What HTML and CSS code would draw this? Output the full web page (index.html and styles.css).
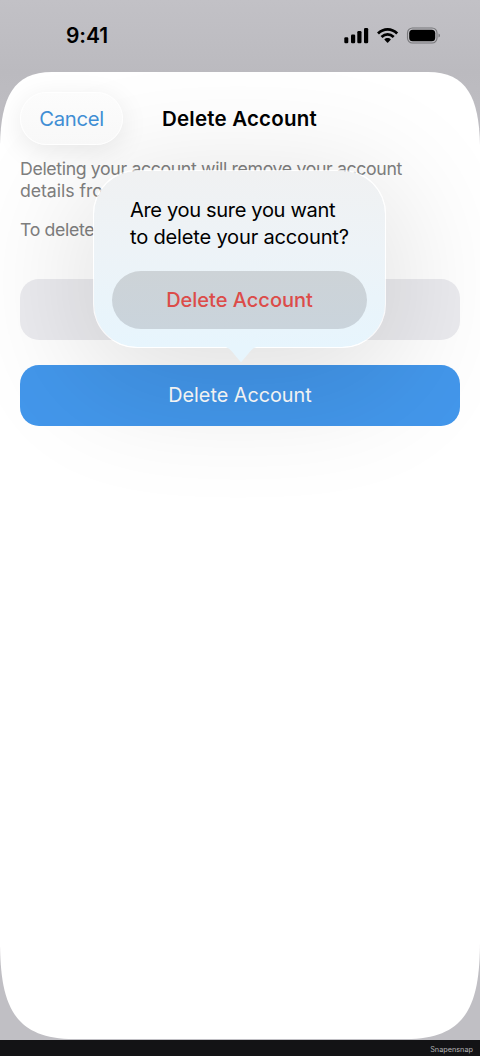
FILE: index.html
```html
<!DOCTYPE html>
<html lang="en">
<head>
<meta charset="utf-8">
<title>Delete Account</title>
<link rel="stylesheet" href="styles.css">
</head>
<body>
<div class="screen">
  <header class="status">
    <span class="time">9:41</span>
    <svg class="status-icons" width="98" height="20" viewBox="0 0 98 20">
      <rect x="1.3" y="11.2" width="4" height="6" rx="1.2"/>
      <rect x="8" y="8.5" width="4.2" height="8.7" rx="1.2"/>
      <rect x="14.3" y="5" width="4.2" height="12.2" rx="1.2"/>
      <rect x="21" y="2" width="4.2" height="15.2" rx="1.2"/>
      <g fill="none" stroke="#000" stroke-width="2.8">
        <path d="M35 7.4C40.7 1.9 48.5 1.9 54.2 7.4"/>
        <path d="M38.5 11C42.3 7.5 46.9 7.5 50.7 11"/>
      </g>
      <path d="M41.3 13.4C43.1 11.6 46.1 11.6 47.9 13.4L45.1 16.6Q44.6 17.1 44.1 16.6Z"/>
      <rect x="64.5" y="2" width="29.5" height="15" rx="5" fill="none" stroke="#77777a" stroke-width="1.1"/>
      <rect x="66.2" y="3.8" width="26" height="11.5" rx="3.5"/>
      <path d="M95.5 7.5Q97 8 97 9.5T95.5 11.5Z" fill="#77777a"/>
    </svg>
  </header>
  <main class="sheet">
    <svg class="sheet-shape" width="480" height="967" viewBox="0 72 480 967">
      <path fill="#fff" d="M0 145C1 98 13 72 52 72H428C467 72 479 98 480 145V940C480 1003 468 1039 406 1039H74C12 1039 0 1003 0 940Z"/>
    </svg>
    <div class="content">
      <p class="copy first">Deleting your account will remove your account<br><span class="copy-line">details from</span></p>
      <p class="copy">To delete</p>
      <div class="field"></div>
      <button class="submit">Delete Account</button>
    </div>
    <div class="shade-clip"><div class="shade"></div></div>
    <div class="nav">
      <button class="cancel">Cancel</button>
      <h1 class="title">Delete Account</h1>
    </div>
    <section class="popover">
      <svg class="popover-arrow" width="42" height="18" viewBox="0 0 42 18"><path fill="#e7f5fd" d="M0 0H42Q35 0 30.5 5L23 14Q21 18 19 14L11.5 5Q7 0 0 0Z"/></svg>
      <p class="question"><span class="question-line">Are you sure you want</span><br>to delete your account?</p>
      <button class="confirm">Delete Account</button>
    </section>
  </main>
  <footer class="footer">Snapensnap</footer>
</div>
</body>
</html>
```
FILE: styles.css
```css
* { box-sizing: border-box; }
body { margin: 0; font-family: Inter, "Liberation Sans", sans-serif; color: #000; }
button { border: 0; padding: 0; font-family: inherit; white-space: nowrap; }
p, h1 { margin: 0; }
.screen { width: 480px; height: 1056px; overflow: hidden; background: #c0bfc4; display: flex; flex-direction: column; }
.status { flex: 0 0 72px; display: flex; justify-content: space-between; align-items: flex-start; padding: 23px 40px 0 66px; background: linear-gradient(#c2c1c6, #bbbabf); }
.time { font-size: 21px; line-height: 26px; font-weight: 600; letter-spacing: -0.1px; }
.status-icons { margin: 3px -1px 0 0; }
.sheet { position: relative; isolation: isolate; flex: 0 0 968px; background: linear-gradient(#bbbabf, #c0bfc4 80px); }
.sheet-shape { position: absolute; left: 0; top: 0; z-index: -1; }
.content { padding: 86px 20px 0; display: flex; flex-direction: column; }
.nav { position: absolute; left: 20px; right: 20px; top: 20px; height: 53px; display: flex; align-items: center; gap: 39px; }
.cancel { width: 103px; height: 53px; border-radius: 27px; background: linear-gradient(#fcfcfc, #f8f8f8); border: 1.5px solid #fff; color: #3f8ed4; font-size: 20.3px; letter-spacing: -0.3px; box-shadow: 0 6px 28px rgba(0,0,0,.085); }
.title { font-size: 20.5px; line-height: 26px; font-weight: 600; letter-spacing: 0.2px; white-space: nowrap; }
.copy { font-size: 17.7px; line-height: 22px; letter-spacing: -0.35px; color: #808080; margin-top: 17px; white-space: nowrap; }
.copy.first { margin-top: 0; }
.copy-line { letter-spacing: -0.05px; }
.field { margin-top: 38px; flex: 0 0 61px; border-radius: 19px; background: #ebebef; }
.submit { margin-top: 24.5px; flex: 0 0 61px; border-radius: 19px; background: #4397eb; color: #fff; font-size: 19.8px; box-shadow: 0 0 0 1px rgba(255,255,255,.7); }
.shade-clip { position: absolute; inset: 0; overflow: hidden; clip-path: path("M0 73C1 26 13 0 52 0H428C467 0 479 26 480 73V600H0Z"); }
.shade { position: absolute; left: 93px; top: 98px; width: 293px; height: 178px; border-radius: 44px; box-shadow: 0 24px 125px 16px rgba(0,0,0,.12); }
.popover { position: absolute; left: 93px; top: 98px; width: 293px; height: 178px; border-radius: 44px; border: 1.5px solid rgba(255,255,255,.75); background: linear-gradient(#f0f1f2, #edf3f7 45%, #e7f5fd) padding-box; padding: 25.5px 18px 18.5px; display: flex; flex-direction: column; justify-content: space-between; }
.popover-arrow { position: absolute; left: 126px; top: 175px; }
.question { padding-left: 18px; font-size: 20.1px; line-height: 27px; letter-spacing: -0.2px; white-space: nowrap; }
.question-line { letter-spacing: -0.36px; }
.confirm { height: 58px; border-radius: 29px; background: linear-gradient(#cdd3d7, #cad4dc); color: #dc4c49; font-size: 20px; font-weight: 450; }
.footer { flex: 1; background: #131315; color: #b5b5b7; font-size: 7.3px; line-height: 20px; padding-right: 7px; text-align: right; }
```
